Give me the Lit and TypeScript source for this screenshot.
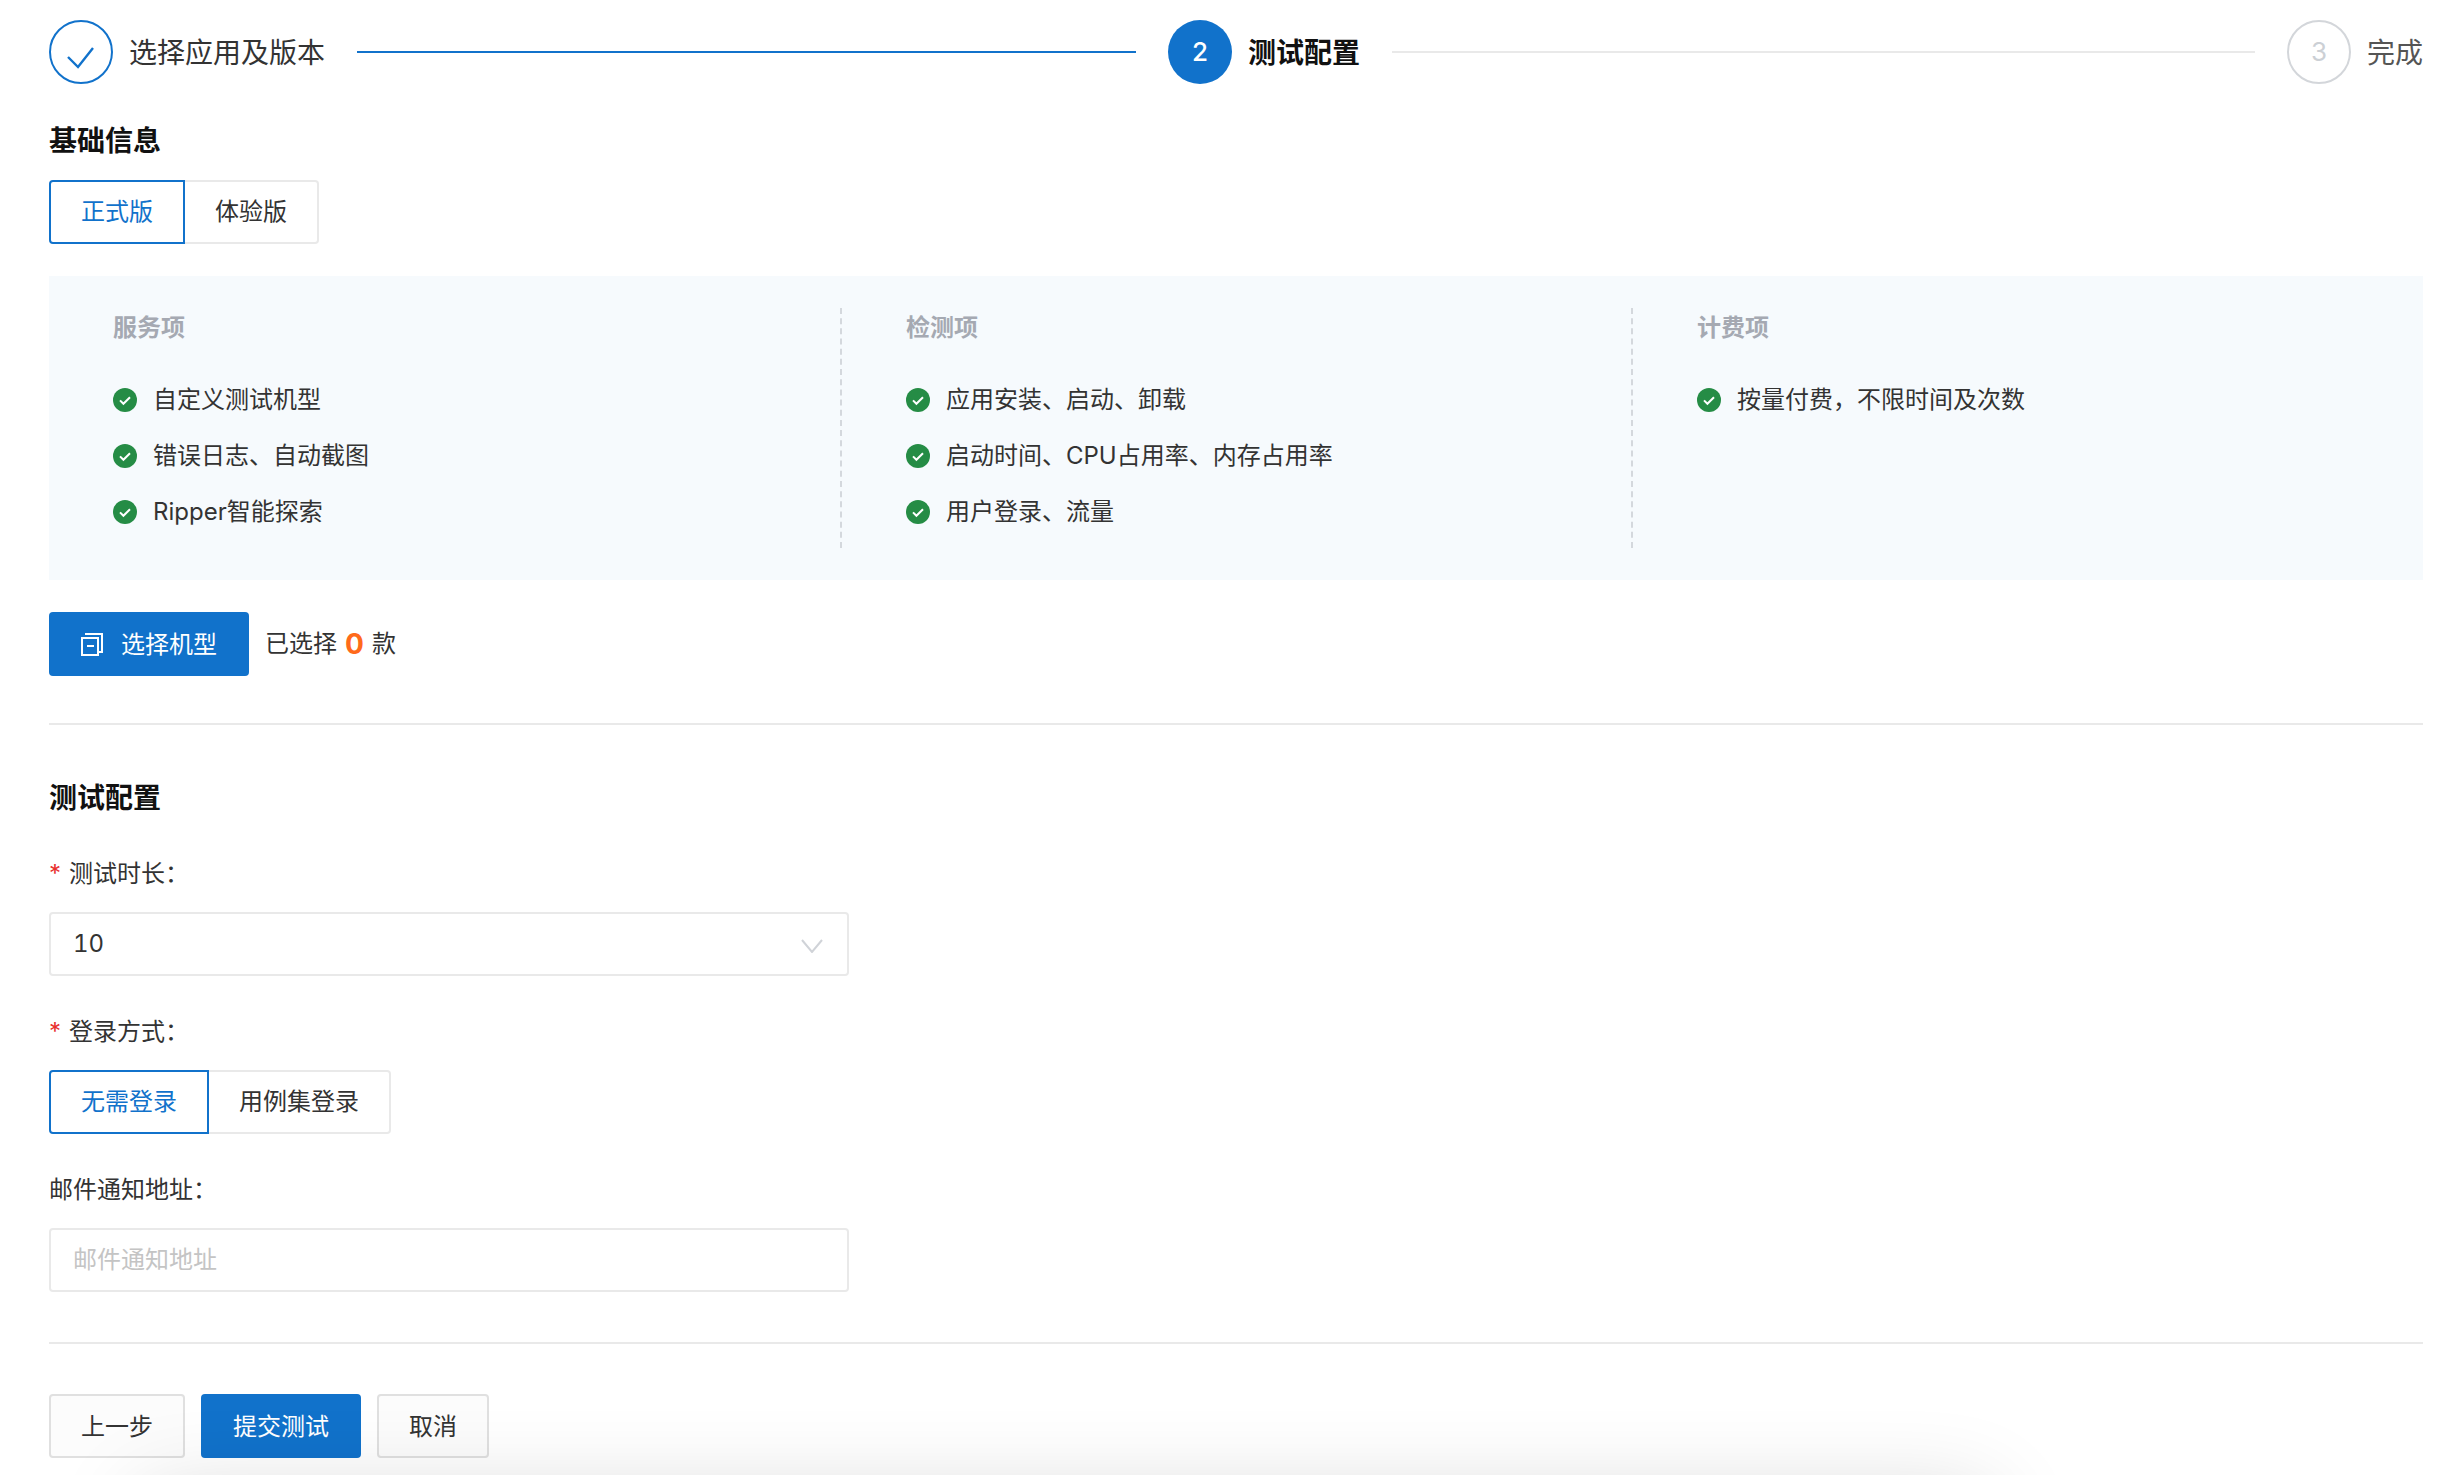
import { LitElement, html, css, svg } from "lit";
import { customElement } from "lit/decorators.js";

const columns = [
  { title: "服务项", items: ["自定义测试机型", "错误日志、自动截图", "Ripper智能探索"] },
  { title: "检测项", items: ["应用安装、启动、卸载", "启动时间、CPU占用率、内存占用率", "用户登录、流量"] },
  { title: "计费项", items: ["按量付费，不限时间及次数"] },
];

const okIcon = svg`<svg class="ok" viewBox="0 0 24 24" width="24" height="24"><circle cx="12" cy="12" r="12" fill="#258c45"/><path d="M7 12.4 10.4 15.8 17 9.2" fill="none" stroke="#fff" stroke-width="2"/></svg>`;

@customElement("app-root")
export class AppRoot extends LitElement {
  static styles = css`
    :host {
      display: block;
      box-sizing: border-box;
      width: 2450px;
      height: 1475px;
      padding: 20px 27px 0 49px;
      background: #fff;
      color: #333;
      font-family: Inter, "Noto Sans CJK SC", sans-serif;
      font-size: 24px;
      overflow: hidden;
    }
    .stepper { display: flex; align-items: center; height: 64px; }
    .stage { flex: 1; display: flex; align-items: center; }
    .stage.last { flex: none; }
    .step { display: flex; align-items: center; gap: 16px; flex: none; font-size: 28px; line-height: 40px; }
    .step-text { padding-top: 1px; }
    .dot {
      box-sizing: border-box; width: 64px; height: 64px; border-radius: 50%;
      display: flex; align-items: center; justify-content: center; font-size: 26px; flex: none;
    }
    .dot.current { background: #1172cb; color: #fff; font-weight: 500; }
    .dot.todo { border: 2px solid #d3d6da; color: #ccd0d5; }
    .dot svg { display: block; }
    .step.current { color: #111; font-weight: 700; }
    .step.todo { color: #555; }
    .line { flex: 1; height: 2px; margin: 0 32px; background: #e9e9e9; }
    .line.done { background: #1172cb; }

    h2 { margin: 0; font-size: 28px; line-height: 40px; font-weight: 700; color: #111; }
    .h-basic { margin-top: 37px; }
    .h-config { margin-top: 53px; }

    .seg { display: flex; height: 64px; }
    .seg button {
      box-sizing: border-box; height: 64px; padding: 0 30px; margin: 0;
      background: #fff; border: 2px solid #e9e9e9; border-left: none;
      font: inherit; line-height: 40px; color: #333; border-radius: 0 4px 4px 0;
    }
    .seg button.on {
      border: 2px solid #1172cb; color: #1172cb; border-radius: 4px 0 0 4px;
    }
    .seg-basic { margin-top: 19px; }

    .panel {
      display: grid; grid-template-columns: 793px 791px 1fr;
      margin-top: 32px; padding: 32px 0; background: #f6fafd;
    }
    .col { box-sizing: border-box; min-height: 240px; padding-left: 64px; border-right: 2px dashed #d4d8dd; }
    .col:last-child { border-right: none; }
    .col-title { line-height: 40px; font-weight: 700; color: #a5a9b2; }
    ul { list-style: none; margin: 32px 0 0; padding: 0; display: flex; flex-direction: column; gap: 16px; }
    li { display: flex; align-items: center; gap: 16px; height: 40px; line-height: 40px; }
    .ok { flex: none; display: block; }

    .pick { display: flex; align-items: center; gap: 16px; margin-top: 32px; height: 64px; }
    .btn {
      box-sizing: border-box; height: 64px; padding: 0 30px; margin: 0; border-radius: 4px;
      font: inherit; line-height: 40px; color: #333; background: #fff; border: 2px solid #e3e3e3;
      display: inline-flex; align-items: center; justify-content: center;
    }
    .btn.primary { background: #1172cb; border: none; color: #fff; padding: 0 32px; }
    .btn.icon { gap: 18px; }
    .btn.icon span { padding-top: 2px; }
    .btn svg { display: block; flex: none; }
    .count { display: flex; align-items: center; gap: 8px; line-height: 40px; }
    .count b { color: #ff6a1a; font-size: 28px; font-weight: 700; }

    hr { border: none; height: 2px; background: #e9e9e9; margin: 0; }
    .hr-1 { margin-top: 47px; }
    .hr-2 { margin-top: 50px; }

    .label { line-height: 40px; display: flex; align-items: center; margin-top: 36px; }
    .req { color: #e8302e; width: 20px; flex: none; }
    .control {
      box-sizing: border-box; width: 800px; height: 64px; margin-top: 18px;
      border: 2px solid #e9e9e9; border-radius: 4px; padding: 0 24px 0 22px; line-height: 40px;
      display: flex; align-items: center; justify-content: space-between;
    }
    .control svg { display: block; margin-top: 4px; }
    .num { font-variant-numeric: tabular-nums; }
    .placeholder { color: #c4c4c4; }
    .seg-login { margin-top: 18px; }

    .actions { display: flex; gap: 16px; margin-top: 50px; }
    .actions .btn { padding-top: 2px; }
    .btn.ghost { background: #fcfcfc; border-color: #e0e0e0; }

    .veil { position: fixed; inset: 0; overflow: hidden; pointer-events: none; }
    .veil div {
      position: absolute; left: 150px; width: 1830px; top: 1505px; height: 120px;
      box-shadow: 0 0 90px 10px rgba(0, 0, 0, 0.16);
    }
  `;

  render() {
    return html`
      <div class="stepper">
        <div class="stage">
          <div class="step">
            <span class="dot"><svg width="64" height="64" viewBox="0 0 64 64"><circle cx="32" cy="32" r="31" fill="none" stroke="#1172cb" stroke-width="2"/><path d="M19 37 29 47 44 28" fill="none" stroke="#1172cb" stroke-width="2.4"/></svg></span>
            <span class="step-text">选择应用及版本</span>
          </div>
          <div class="line done"></div>
        </div>
        <div class="stage">
          <div class="step current"><span class="dot current">2</span><span class="step-text">测试配置</span></div>
          <div class="line"></div>
        </div>
        <div class="stage last">
          <div class="step todo"><span class="dot todo">3</span><span class="step-text">完成</span></div>
        </div>
      </div>

      <h2 class="h-basic">基础信息</h2>
      <div class="seg seg-basic"><button class="on">正式版</button><button>体验版</button></div>

      <div class="panel">
        ${columns.map((c) => html`
          <div class="col">
            <div class="col-title">${c.title}</div>
            <ul>${c.items.map((i) => html`<li>${okIcon}<span>${i}</span></li>`)}</ul>
          </div>`)}
      </div>

      <div class="pick">
        <button class="btn primary icon">
          <svg width="22" height="24" viewBox="0 0 22 24" fill="none" stroke="#fff" stroke-width="2"><path d="M4 2H21V20H17"/><rect x="1" y="6" width="16" height="17"/><path d="M6 14H13"/></svg>
          <span>选择机型</span>
        </button>
        <div class="count"><span>已选择</span><b>0</b><span>款</span></div>
      </div>

      <hr class="hr-1" />

      <h2 class="h-config">测试配置</h2>
      <div class="label"><span class="req">*</span><span>测试时长：</span></div>
      <div class="control">
        <span class="num">10</span>
        <svg width="22" height="14" viewBox="0 0 22 14" fill="none" stroke="#d0d3d8" stroke-width="2"><path d="M1 1 11 13 21 1"/></svg>
      </div>
      <div class="label"><span class="req">*</span><span>登录方式：</span></div>
      <div class="seg seg-login"><button class="on">无需登录</button><button>用例集登录</button></div>
      <div class="label">邮件通知地址：</div>
      <div class="control"><span class="placeholder">邮件通知地址</span></div>

      <hr class="hr-2" />

      <div class="actions">
        <button class="btn ghost">上一步</button>
        <button class="btn primary">提交测试</button>
        <button class="btn ghost">取消</button>
      </div>

      <div class="veil"><div></div></div>
    `;
  }
}
